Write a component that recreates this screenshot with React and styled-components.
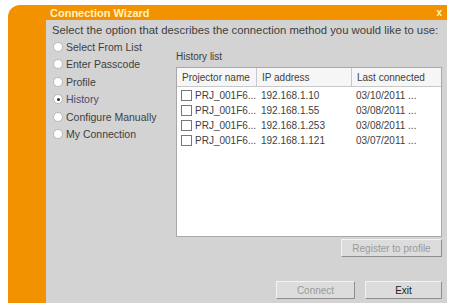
import React from "react";
import styled, { createGlobalStyle } from "styled-components";

const Global = createGlobalStyle`
body{
  margin: 0;
  background: #fff;
  font-family: "Liberation Sans", Arial, sans-serif;
}
`;

const Window = styled.div`
margin: 5px 4px 0 8px;
width: 439px;
height: 298px;
background: #f39200;
border-top-left-radius: 12px;
display: flex;
flex-direction: column;
`;

const TitleBar = styled.div`
height: 15px;
display: flex;
align-items: center;
justify-content: space-between;
padding: 0 5px 0 42px;
color: #fff3c4;
font-size: 11px;
font-weight: bold;
>span{
  font-size: 10px;
}
`;

const Panel = styled.div`
flex: 1;
margin-left: 38px;
background: #d3d3d3;
padding: 4px 5px 0 6px;
display: flex;
flex-direction: column;
color: #3e3e3e;
font-size: 10px;
`;

const Prompt = styled.div`
white-space: nowrap;
font-size: 11.3px;
`;

const Main = styled.div`
display: flex;
margin-top: 4px;
`;

const Options = styled.div`
width: 123px;
display: flex;
flex-direction: column;
gap: 4.6px;
padding-left: 1px;
`;

const Option = styled.label`
display: flex;
align-items: center;
gap: 3px;
height: 13px;
white-space: nowrap;
font-size: 10.5px;
color: ${p => (p.active ? "#4a4a78" : "#3e3e3e")};
`;

const Radio = styled.span`
width: 8px;
height: 8px;
border-radius: 50%;
background: #fff;
border: 1px solid #b8b8b8;
display: flex;
align-items: center;
justify-content: center;
&::after{
  content: "";
  width: 3px;
  height: 3px;
  border-radius: 50%;
  background: ${p => (p.checked ? "#333" : "transparent")};
}
`;

const Right = styled.div`
flex: 1;
display: flex;
flex-direction: column;
padding-top: 11px;
`;

const ListLabel = styled.div`
margin-bottom: 5px;
`;

const ListBox = styled.div`
height: 168px;
background: #fff;
border: 1px solid #a8a8a8;
`;

const Row = styled.div`
display: grid;
grid-template-columns: 80px 95px 1fr;
height: ${p => (p.head ? "18px" : "15px")};
margin-bottom: ${p => (p.head ? "1px" : "0")};
align-items: center;
${p => p.head && "border-bottom: 1px solid #c8c8c8; background: #f6f6f6;"}
>div{
  padding-left: ${p => (p.head ? "5px" : "4px")};
  white-space: nowrap;
  overflow: hidden;
  border-right: ${p => (p.head ? "1px solid #c8c8c8" : "none")};
  height: 100%;
  display: flex;
  align-items: center;
}
>div:last-child{ border-right: none; }
`;

const Check = styled.span`
width: 9px;
height: 9px;
border: 1px solid #777;
background: #fff;
margin-right: 3px;
flex-shrink: 0;
`;

const ButtonRow = styled.div`
display: flex;
justify-content: flex-end;
gap: 10px;
margin-top: ${p => p.top}px;
`;

const Button = styled.div`
width: ${p => p.w}px;
height: 16px;
display: flex;
align-items: center;
justify-content: center;
background: #dcdcdc;
border: 1px solid #f4f4f4;
border-right-color: #8e8e8e;
border-bottom-color: #8e8e8e;
color: ${p => (p.disabled ? "#9a9a9a" : "#222")};
font-size: 10px;
`;

const options = [
  "Select From List",
  "Enter Passcode",
  "Profile",
  "History",
  "Configure Manually",
  "My Connection",
];

const rows = [
  ["192.168.1.10", "03/10/2011 ..."],
  ["192.168.1.55", "03/08/2011 ..."],
  ["192.168.1.253", "03/08/2011 ..."],
  ["192.168.1.121", "03/07/2011 ..."],
];

const App = () => {
  return (
    <>
      <Global />
      <Window>
        <TitleBar>
          Connection Wizard
          <span>x</span>
        </TitleBar>
        <Panel>
          <Prompt>Select the option that describes the connection method you would like to use:</Prompt>
          <Main>
            <Options>
              {options.map(o => (
                <Option key={o} active={o === "History"}>
                  <Radio checked={o === "History"} />
                  {o}
                </Option>
              ))}
            </Options>
            <Right>
              <ListLabel>History list</ListLabel>
              <ListBox>
                <Row head>
                  <div>Projector name</div>
                  <div>IP address</div>
                  <div>Last connected</div>
                </Row>
                {rows.map(r => (
                  <Row key={r[0]}>
                    <div><Check />PRJ_001F6...</div>
                    <div>{r[0]}</div>
                    <div>{r[1]}</div>
                  </Row>
                ))}
              </ListBox>
              <ButtonRow top={2}>
                <Button w={99} disabled>Register to profile</Button>
              </ButtonRow>
              <ButtonRow top={24}>
                <Button w={77} disabled>Connect</Button>
                <Button w={75}>Exit</Button>
              </ButtonRow>
            </Right>
          </Main>
        </Panel>
      </Window>
    </>
  );
};

export default App;
